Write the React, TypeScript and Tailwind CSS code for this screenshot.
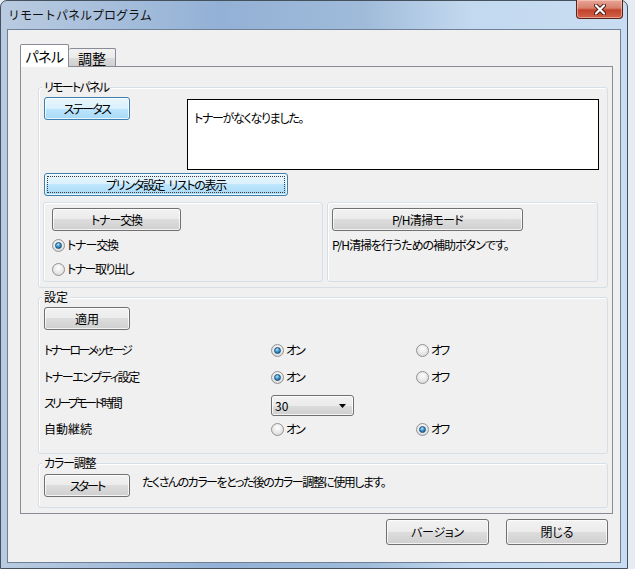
import React from 'react';

type BtnProps = { children: React.ReactNode; className?: string; blue?: boolean; focus?: boolean };

const Btn = ({ children, className = '', blue = false, focus = false }: BtnProps) => (
  <div
    className={`relative flex shrink-0 items-center justify-center rounded-[3px] border leading-none shadow-[inset_0_0_0_1px_rgba(255,255,255,0.75)] ${
      blue
        ? 'border-[#3c7fb1] bg-[linear-gradient(#eaf6fd_0%,#d9f0fc_50%,#bee6fd_50%,#a7d9f5_100%)]'
        : 'border-[#707070] bg-[linear-gradient(#f2f2f2_0%,#ebebeb_50%,#dddddd_50%,#cfcfcf_100%)]'
    } ${className}`}
  >
    {focus && <span className="absolute inset-[2px] border border-dotted border-[#3a3a3a]" />}
    {children}
  </div>
);

const Radio = ({ checked = false, label }: { checked?: boolean; label: React.ReactNode }) => (
  <div className="flex items-center gap-[2px]">
    <span className="flex h-[13px] w-[13px] shrink-0 items-center justify-center rounded-full border border-[#929292] bg-[radial-gradient(circle_at_50%_35%,#ffffff_0%,#e4e4e4_60%,#cfcfcf_100%)]">
      {checked && (
        <span className="h-[7px] w-[7px] rounded-full border border-[#1c4f78] bg-[radial-gradient(circle_at_40%_30%,#b8e4fb_0%,#3c9ad4_45%,#0d4c7c_100%)]" />
      )}
    </span>
    {label}
  </div>
);

type GroupProps = { title: React.ReactNode; className?: string; children: React.ReactNode };

const Group = ({ title, className = '', children }: GroupProps) => (
  <div className={`relative rounded-[3px] border border-[#d5dfe5] shadow-[inset_1px_1px_0_#ffffff] ${className}`}>
    <span className="absolute left-[3px] top-[-8px] bg-[#f0f0f0] px-[2px] leading-[14px]">{title}</span>
    {children}
  </div>
);

const SubGroup = ({ className = '', children }: { className?: string; children: React.ReactNode }) => (
  <div className={`rounded-[3px] border border-[#d5dfe5] shadow-[inset_1px_1px_0_#ffffff] ${className}`}>{children}</div>
);

const On = () => <span className="tracking-[-2px]">オン</span>;
const Off = () => <span className="tracking-[-2px]">オフ</span>;

export default function App() {
  return (
    <div className="flex h-[569px] w-[635px] overflow-hidden bg-[#e6ecf3] font-['Noto_Sans_CJK_JP',sans-serif] text-[12px] leading-none text-black [font-feature-settings:'palt']">
      <div className="flex h-[569px] w-[628px] shrink-0 flex-col rounded-t-[7px] border border-[#46515e] bg-[linear-gradient(90deg,#b9cbe0_0%,#a9c0dc_15%,#93b1d6_35%,#a0bbda_58%,#c3d9ef_75%,#c8ddf2_100%)] px-[6px] pb-[5px]">
        {/* Title bar */}
        <div className="flex h-[28px] shrink-0 items-center">
          <span className="pl-[1px] text-[12px] text-[#111] [font-feature-settings:normal]">リモートパネルプログラム</span>
          <div className="-mt-[1px] ml-auto mr-[-2px] flex h-[19px] w-[47px] items-center justify-center self-start rounded-b-[4px] border border-t-0 border-[#5b2219] bg-[linear-gradient(#e8a597_0%,#d7806c_45%,#c2432b_55%,#d2624a_100%)] shadow-[inset_0_0_0_1px_rgba(255,220,210,0.5)]">
            <svg width="12" height="11" viewBox="0 0 12 11">
              <path d="M2 1.5 L10 9.5 M10 1.5 L2 9.5" stroke="#4a1a12" strokeWidth="4" strokeLinecap="round" />
              <path d="M2 1.5 L10 9.5 M10 1.5 L2 9.5" stroke="#ffffff" strokeWidth="2.2" strokeLinecap="round" />
            </svg>
          </div>
        </div>

        {/* Client area */}
        <div className="flex flex-1 flex-col border border-[#6f8197] bg-[#f0f0f0]">
          {/* Tabs */}
          <div className="relative z-10 ml-[12px] mt-[14px] flex h-[22px] items-end text-[14px]">
            <div className="mb-[-1px] flex h-[23px] w-[49px] items-center justify-center rounded-t-[2px] border border-b-0 border-[#898c95] bg-white pb-[1px] tracking-[-0.5px]">
              パネル
            </div>
            <div className="flex h-[18px] w-[47px] items-center justify-center rounded-t-[2px] border border-b-0 border-l-0 border-[#898c95] bg-[linear-gradient(#f2f2f2_0%,#ebebeb_50%,#dddddd_50%,#cfcfcf_100%)] pt-[1px]">
              調整
            </div>
          </div>

          {/* Tab page */}
          <div className="ml-[12px] flex w-[593px] flex-col border border-[#898c95] bg-[#f0f0f0] pb-[5px]">
            <Group title={<span className="tracking-[-1.7px]">リモートパネル</span>} className="ml-[17px] mt-[20px] h-[201px] w-[570px]">
              <div className="flex items-start">
                <Btn blue className="ml-[5px] mt-[9px] h-[23px] w-[86px]">
                  <span className="tracking-[-1.6px]">ステータス</span>
                </Btn>
                <div className="ml-auto mr-[8px] mt-[11px] h-[71px] w-[412px] border border-black bg-white pl-[6px] pt-[11px] leading-[14px] tracking-[-1.3px]">
                  トナーがなくなりました。
                </div>
              </div>
              <Btn blue focus className="ml-[5px] mt-[3px] h-[23px] w-[244px]">
                <span className="tracking-[-1.3px]">プリンタ設定</span>
                <span className="ml-[4px] tracking-[-1.3px]">リストの表示</span>
              </Btn>
              <div className="ml-[4px] mt-[6px] flex gap-[4px]">
                <SubGroup className="h-[80px] w-[280px]">
                  <Btn className="ml-[8px] mt-[5px] h-[23px] w-[129px]">
                    <span className="tracking-[-1.1px]">トナー交換</span>
                  </Btn>
                  <div className="ml-[8px] mt-[2px] flex h-[24px] items-center">
                    <Radio checked label={<span className="tracking-[-1.1px]">トナー交換</span>} />
                  </div>
                  <div className="ml-[8px] flex h-[24px] items-center">
                    <Radio label={<span className="tracking-[-1.5px]">トナー取り出し</span>} />
                  </div>
                </SubGroup>
                <SubGroup className="h-[80px] w-[271px]">
                  <Btn className="ml-[4px] mt-[5px] h-[23px] w-[191px]">
                    <span className="tracking-[-0.7px]">P/H清掃モード</span>
                  </Btn>
                  <div className="ml-[4px] mt-[2px] flex h-[24px] items-center tracking-[-1px]">
                    P/H清掃を行うための補助ボタンです。
                  </div>
                </SubGroup>
              </div>
            </Group>

            <Group title="設定" className="ml-[17px] mt-[9px] h-[157px] w-[570px]">
              <Btn className="ml-[5px] mt-[9px] h-[23px] w-[86px]">適用</Btn>
              <div className="mt-[7px] flex h-[26px] items-center">
                <div className="w-[232px] pl-[5px] tracking-[-2.4px]">トナーローメッセージ</div>
                <div className="w-[145px]"><Radio checked label={<On />} /></div>
                <Radio label={<Off />} />
              </div>
              <div className="mt-[1px] flex h-[26px] items-center">
                <div className="w-[232px] pl-[5px] tracking-[-1.4px]">トナーエンプティ設定</div>
                <div className="w-[145px]"><Radio checked label={<On />} /></div>
                <Radio label={<Off />} />
              </div>
              <div className="flex h-[26px]">
                <div className="w-[232px] self-center pl-[5px] tracking-[-2.6px]">スリープモード時間</div>
                <div className="mt-[5px] flex h-[21px] w-[83px] items-center justify-between rounded-[3px] border border-[#707070] bg-[linear-gradient(#f2f2f2_0%,#ebebeb_50%,#dddddd_50%,#cfcfcf_100%)] pl-[3px] pr-[7px] shadow-[inset_0_0_0_1px_rgba(255,255,255,0.75)]">
                  <span>30</span>
                  <svg width="7" height="4" viewBox="0 0 7 4">
                    <path d="M0 0 H7 L3.5 4 Z" fill="#000" />
                  </svg>
                </div>
              </div>
              <div className="flex h-[26px] items-center">
                <div className="w-[232px] pl-[5px]">自動継続</div>
                <div className="w-[145px]"><Radio label={<On />} /></div>
                <Radio checked label={<Off />} />
              </div>
            </Group>

            <Group title={<span className="tracking-[-1.2px]">カラー調整</span>} className="ml-[17px] mt-[9px] h-[45px] w-[570px]">
              <div className="flex items-start">
                <Btn className="ml-[5px] mt-[10px] h-[23px] w-[86px]">
                  <span className="tracking-[-2px]">スタート</span>
                </Btn>
                <span className="ml-[12px] mt-[11px] leading-[14px] tracking-[-1.5px]">
                  たくさんのカラーをとった後のカラー調整に使用します。
                </span>
              </div>
            </Group>
          </div>

          {/* Bottom buttons */}
          <div className="mr-[12px] mt-[5px] flex justify-end gap-[17px]">
            <Btn className="h-[26px] w-[103px]">
              <span className="tracking-[-0.3px]">バージョン</span>
            </Btn>
            <Btn className="h-[26px] w-[102px]">閉じる</Btn>
          </div>
        </div>
      </div>
    </div>
  );
}
